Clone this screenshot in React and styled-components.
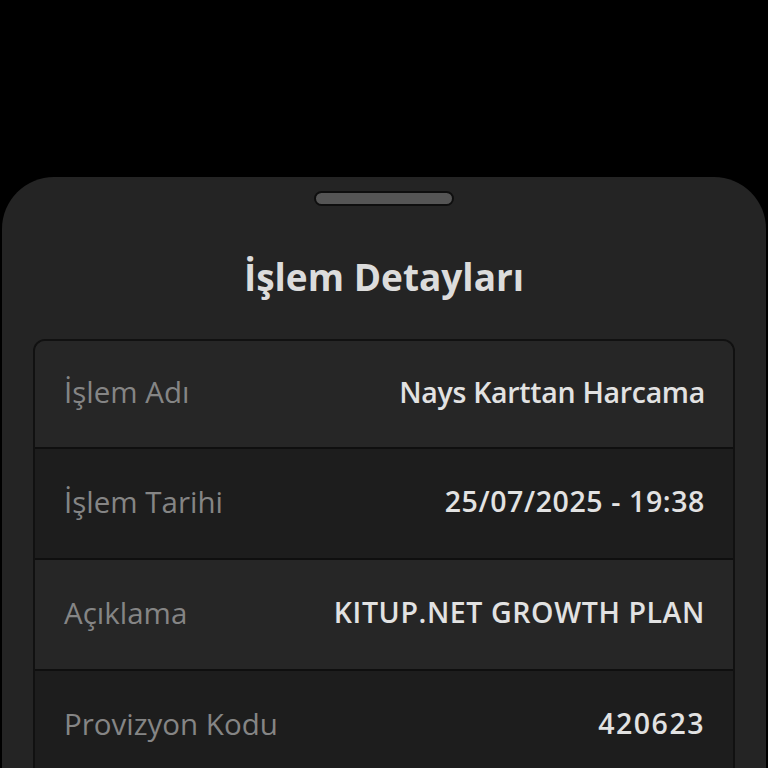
import React from "react";
import styled, { createGlobalStyle } from "styled-components";

const Global = createGlobalStyle`
  html, body { margin: 0; padding: 0; background: #000; }
  body { font-family: "Open Sans", "Noto Sans", sans-serif; }
  * { box-sizing: border-box; }
`;

const Page = styled.div`
  width: 768px;
  height: 768px;
  background: #000;
  padding: 177px 2px 0 2px;
  overflow: hidden;
`;

const Sheet = styled.div`
  height: 700px;
  background: #242424;
  border-radius: 52px 52px 0 0;
  display: flex;
  flex-direction: column;
  align-items: center;
  padding: 14px 31px 0 31px;
`;

const Handle = styled.div`
  width: 140px;
  height: 15px;
  border-radius: 8px;
  background: #555;
  border: 2px solid #0e0e0e;
`;

const Title = styled.h1`
  margin: 49px 0 0;
  font-size: 37px;
  font-weight: 700;
  color: #dcdcdc;
  line-height: 44px;
`;

const Card = styled.div`
  margin-top: 40px;
  width: 100%;
  border: 2px solid #111;
  border-radius: 12px;
  overflow: hidden;
  display: flex;
  flex-direction: column;
`;

const Row = styled.div`
  height: ${(p) => (p.$first ? 106 : 111)}px;
  display: flex;
  align-items: center;
  justify-content: space-between;
  padding: 0 28px 5px 29px;
  background: ${(p) => (p.$alt ? "#1d1d1d" : "#262626")};
  border-top: ${(p) => (p.$first ? "none" : "2px solid #0f0f0f")};
`;

const Label = styled.span`
  font-size: 29.5px;
  color: #858585;
  font-weight: 500;
`;

const Value = styled.span`
  font-size: 28.5px;
  color: #e2e2e2;
  font-weight: 600;
  letter-spacing: ${(p) => p.$spacing || 0}px;
`;

const rows = [
  ["İşlem Adı", "Nays Karttan Harcama", -0.3],
  ["İşlem Tarihi", "25/07/2025 - 19:38", 0.6],
  ["Açıklama", "KITUP.NET GROWTH PLAN", 0.6],
  ["Provizyon Kodu", "420623", 1.5],
];

export default function App() {
  return (
    <Page>
      <Global />
      <Sheet>
        <Handle />
        <Title>İşlem Detayları</Title>
        <Card>
          {rows.map(([l, v, s], i) => (
            <Row key={l} $first={i === 0} $alt={i % 2 === 1}>
              <Label>{l}</Label>
              <Value $spacing={s}>{v}</Value>
            </Row>
          ))}
        </Card>
      </Sheet>
    </Page>
  );
}
